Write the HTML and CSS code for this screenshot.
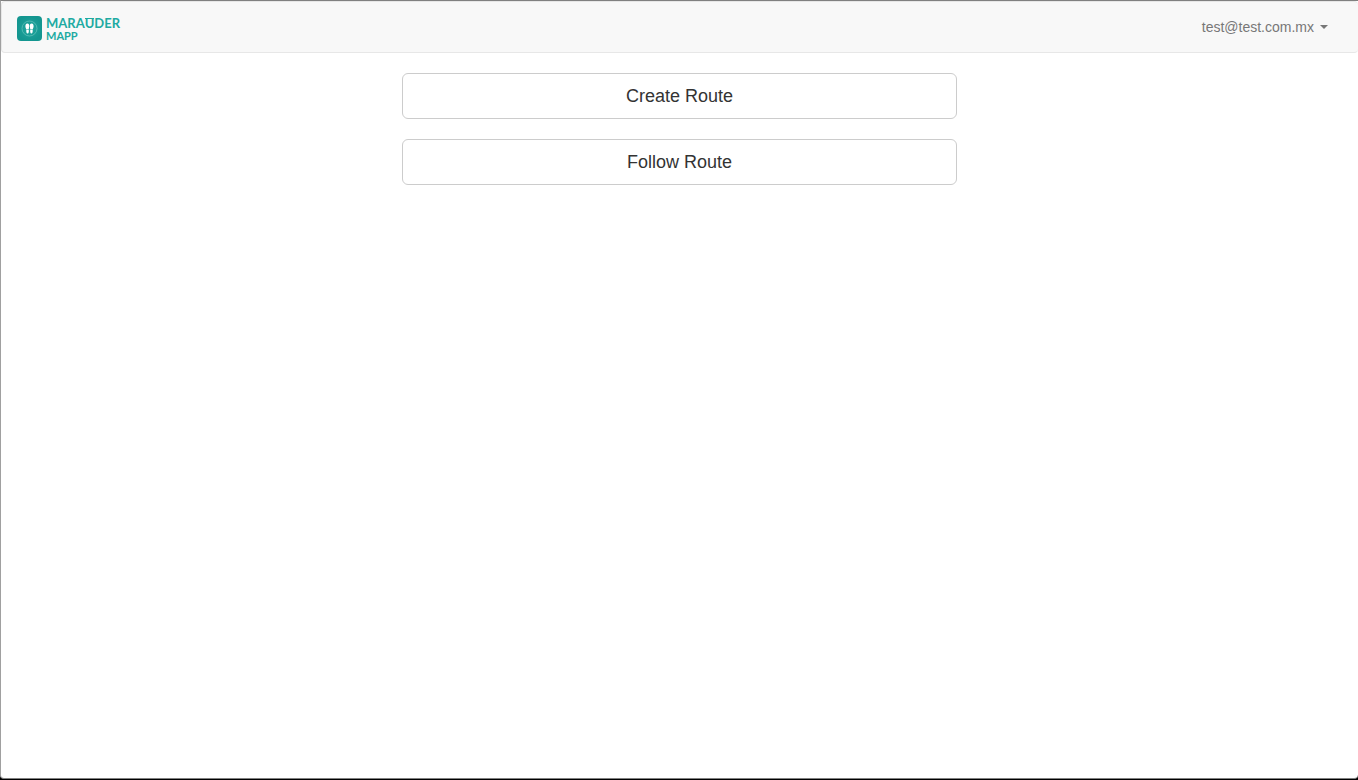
FILE: index.html
```html
<!DOCTYPE html>
<html lang="en">
<head>
<meta charset="utf-8">
<title>Marauder Mapp</title>
<link rel="stylesheet" href="styles.css">
</head>
<body>
<div class="window">
  <nav class="navbar">
    <a class="brand" href="#">
      <svg class="brand-icon" viewBox="0 0 25 25" aria-hidden="true">
        <defs>
          <radialGradient id="tile">
            <stop offset="0" stop-color="#22a79f"/>
            <stop offset="1" stop-color="#149690"/>
          </radialGradient>
        </defs>
        <rect width="25" height="25" rx="4" fill="url(#tile)"/>
        <circle cx="12.500" cy="12.500" r="7.500" fill="none" stroke="#74c9c3" stroke-width=".6"/>
        <g fill="#fff">
          <path d="M10.300 7.500c1.400 0 2 1.200 1.900 2.700-.1 1.300-.4 2.200-.5 3.400H9.200c-.1-1.100-.8-2.100-.8-3.400 0-1.500.6-2.700 1.900-2.700zM9.300 14h2.500c.1 2-.1 3.500-1.200 3.500S9.200 16 9.300 14z"/>
          <path d="M14.700 7.500c-1.400 0-2 1.200-1.900 2.700.1 1.300.4 2.200.5 3.400h2.500c.1-1.100.8-2.100.8-3.400 0-1.500-.6-2.700-1.900-2.700zM15.700 14h-2.500c-.1 2 .1 3.500 1.200 3.500s1.400-1.500 1.300-3.500z"/>
        </g>
      </svg>
      <span class="brand-name">
        <span class="brand-first">MARA<span class="barred">U</span>DER</span>
        <span class="brand-second">MAPP</span>
      </span>
    </a>
    <button class="account" type="button" aria-haspopup="true">test@test.com.mx<span class="caret"></span></button>
  </nav>
  <main class="actions">
    <button class="action" type="button">Create Route</button>
    <button class="action" type="button">Follow Route</button>
  </main>
</div>
</body>
</html>
```
FILE: styles.css
```css
* {
  box-sizing: border-box;
}

body {
  margin: 0;
  background: #000;
  font-family: "Liberation Sans", Arial, sans-serif;
  font-size: 14px;
  color: #333;
}

.window {
  min-height: calc(100vh - 1px);
  border: 1px solid #808080;
  border-left-color: #a0a0a0;
  border-right: 0;
  border-radius: 0 0 4px 4px;
  background: #fff;
}

.navbar {
  display: flex;
  align-items: center;
  justify-content: space-between;
  min-height: 52px;
  padding: 0 30px 0 15px;
  border: 1px solid #e7e7e7;
  border-right: 0;
  border-radius: 4px;
  background: #f8f8f8;
}

.brand {
  display: flex;
  align-items: flex-start;
  gap: 4px;
  padding-top: 4px;
  color: #20aaa2;
  text-decoration: none;
}

.brand-icon {
  width: 25px;
  height: 25px;
}

.brand-name {
  display: flex;
  flex-direction: column;
  font-family: Lato, sans-serif;
  font-weight: 700;
}

.brand-first {
  font-size: 13px;
  line-height: 14px;
}

.brand-second {
  font-size: 11px;
  line-height: 12px;
}

.barred {
  position: relative;
}

.barred::before {
  content: "";
  position: absolute;
  top: 3px;
  left: 0;
  width: 100%;
  height: 1px;
  background: currentColor;
}

.account {
  display: flex;
  align-items: center;
  gap: 6px;
  padding: 0;
  border: 0;
  background: none;
  color: #777;
  font: inherit;
  line-height: 20px;
}

.caret {
  border-top: 4px solid;
  border-right: 4px solid transparent;
  border-left: 4px solid transparent;
}

.actions {
  display: flex;
  flex-direction: column;
  gap: 20px;
  max-width: 555px;
  margin: 20px auto;
}

.action {
  padding: 10px 16px;
  border: 1px solid #ccc;
  border-radius: 6px;
  background: #fff;
  color: #333;
  font-family: inherit;
  font-size: 18px;
  line-height: 24px;
}
```
